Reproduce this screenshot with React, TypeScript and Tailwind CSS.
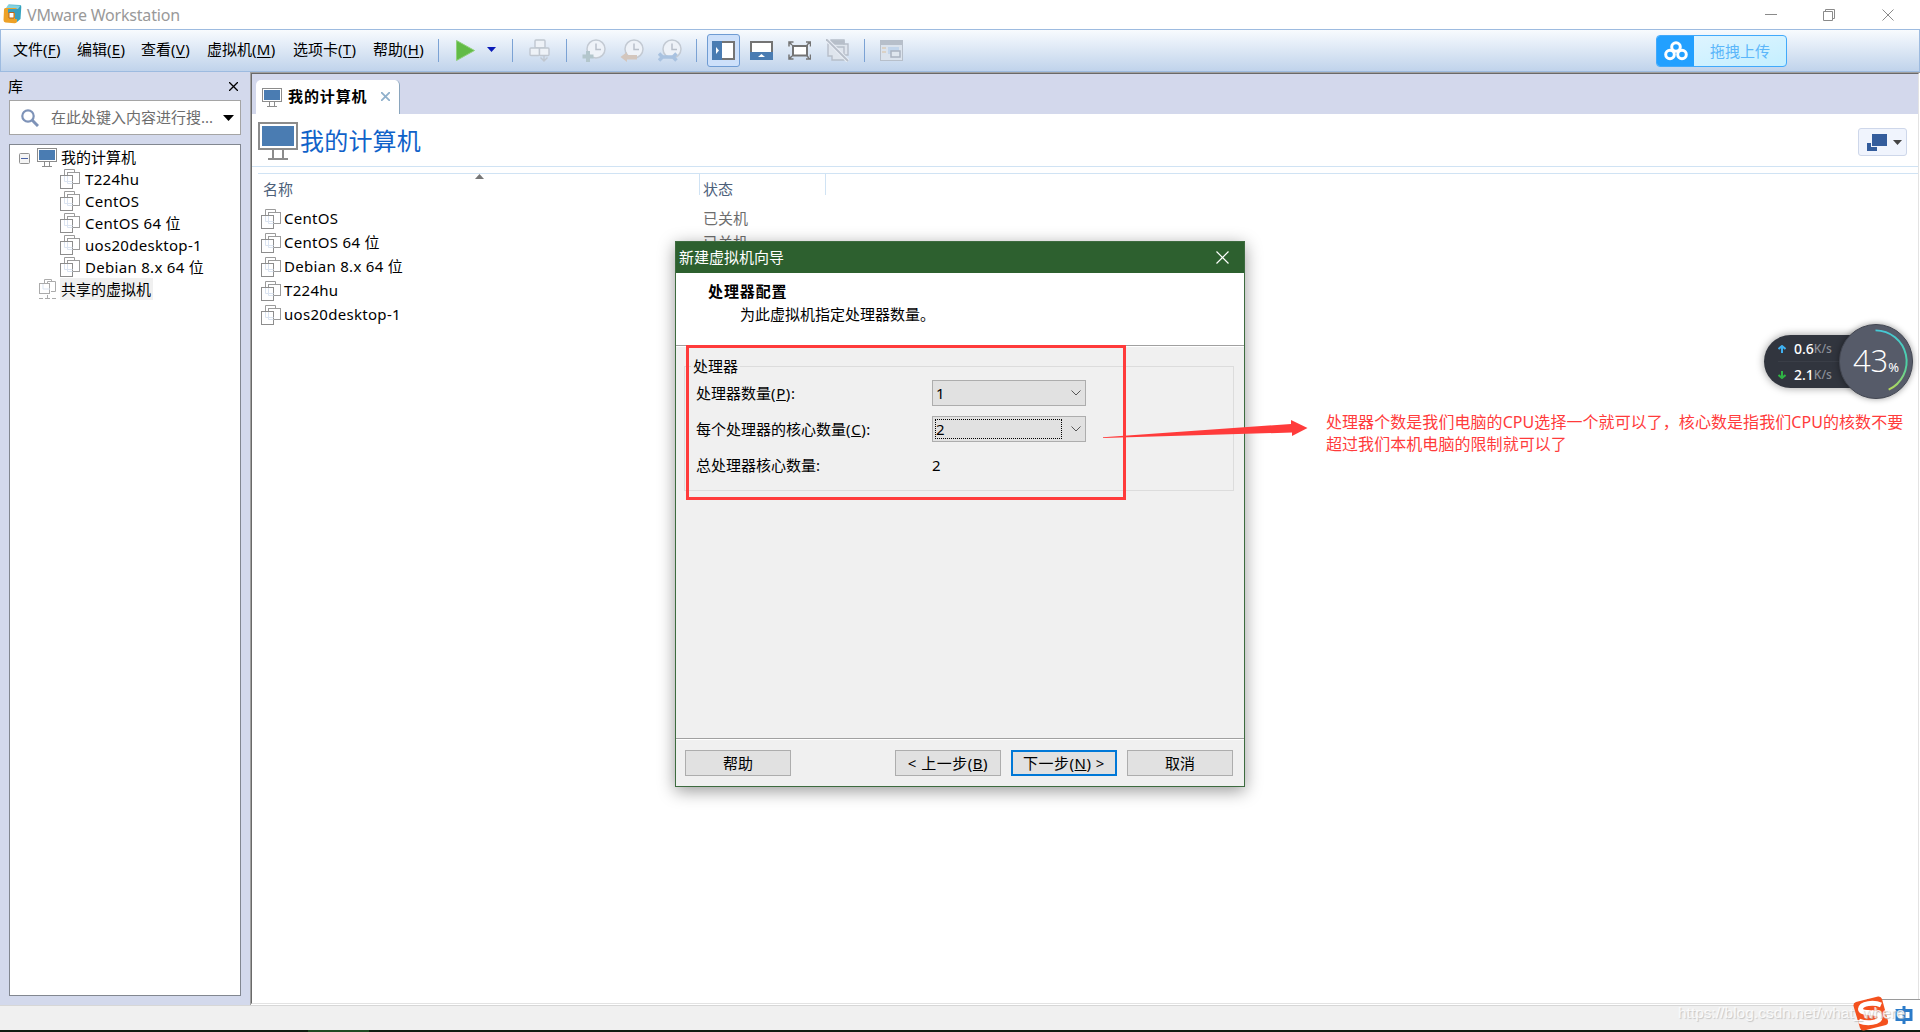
import React from 'react';

const VMS = ['T224hu', 'CentOS', 'CentOS 64 位', 'uos20desktop-1', 'Debian 8.x 64 位'];
const LIST = ['CentOS', 'CentOS 64 位', 'Debian 8.x 64 位', 'T224hu', 'uos20desktop-1'];

const menus = [
  { label: '文件', key: 'F', width: 'w-[64px]' },
  { label: '编辑', key: 'E', width: 'w-[64px]' },
  { label: '查看', key: 'V', width: 'w-[66px]' },
  { label: '虚拟机', key: 'M', width: 'w-[86px]' },
  { label: '选项卡', key: 'T', width: 'w-[80px]' },
  { label: '帮助', key: 'H', width: 'w-[65px]' }
];

const Monitor = ({ className = '' }: { className?: string }) => (
  <svg className={`shrink-0 ${className}`} viewBox="0 0 20 19">
    <rect x="0.5" y="0.5" width="19" height="13" fill="#fff" stroke="#8c8c8c" />
    <rect x="2" y="2" width="16" height="10" fill="#4a7cb2" />
    <path d="M7.5 14v4M12.5 14v4M5 18.5h10" stroke="#8c8c8c" fill="none" />
  </svg>
);

const VmIcon = () => (
  <svg className="shrink-0 w-5 h-5" viewBox="0 0 20 20" fill="none">
    <path d="M4.5 6V0.5h10V3" stroke="#9b9b9b" />
    <rect x="7.5" y="3.5" width="12" height="11" stroke="#9b9b9b" />
    <rect x="0.5" y="6.5" width="12" height="13" fill="#fff" stroke="#8d8d8d" />
    <path d="M4.5 7v5.5h8M7.5 7v7.5h5" stroke="#dbe4f1" />
  </svg>
);

const SharedIcon = () => (
  <svg className="shrink-0 w-[17px] h-5" viewBox="0 0 17 20" fill="none" stroke="#ababab">
    <path d="M5.5 4V0.5h7V2M12 12.5h4.5v-10h-8V5" />
    <rect x="0.5" y="4.5" width="10" height="10" fill="#fff" />
    <path d="M4 5v5h7" stroke="#dbe4f1" />
    <path d="M8.5 16v3M0 19.5h4M6 19.5h5M13 19.5h4" />
  </svg>
);

const Separator = () => <div className="w-px h-[23px] bg-[#7ba2d4]" />;

const Clock = ({ children }: { children: React.ReactNode }) => (
  <svg className="w-6 h-6" viewBox="0 0 24 24" fill="none">
    <circle cx="14" cy="10" r="9" fill="#eef2f8" stroke="#c3cad3" strokeWidth="1.5" />
    <path d="M14 4.5v6h5" stroke="#b9c0ca" strokeWidth="1.5" />
    {children}
  </svg>
);

const TitleBar = () => (
  <header className="flex items-center h-[29px] bg-white pl-[3px]">
    <svg className="w-[19px] h-5 mr-[5px] mb-px" viewBox="0 0 19 20">
      <path d="M5 1.5Q5 0.5 6 0.5L17 1Q18.5 1 18.3 3L17.5 15 14 18 4 12Z" fill="#35a3bf" />
      <path d="M5 1 17.5 1.5 15 5 3 4Z" fill="#85d2e0" />
      <path d="M1 5.5Q1 4 2.5 4H12.5Q14 4 14 5.5V17Q14 19.5 11.5 19.3L2.5 18.5Q0.5 18 0.5 16Z" fill="#eda127" />
      <path d="M5 5H16V15H12V9H5Z" fill="#3b9fbd" />
      <path d="M6 8.5H11V14H6Z" fill="#fff" stroke="#b5661b" />
    </svg>
    <span className="text-[16px] leading-5 text-[#999] tracking-[-0.2px]">VMware Workstation</span>
    <svg className="w-[130px] h-3 ml-auto mr-[25px]" viewBox="0 0 130 12" fill="none" stroke="#8a8a8a">
      <path d="M0 5.5h12M58.5 2.5h9v9h-9zM60.5 2.5v-2h9v9h-2M117.5 0.5l11 11M128.5 0.5l-11 11" />
    </svg>
  </header>
);

const Toolbar = () => (
  <div className="flex items-center h-[43px] border border-[#9dbbe0] bg-gradient-to-b from-[#f8fbfe] to-[#c0d3eb] pl-3">
    <nav className="flex w-[425px] pb-[3px]">
      {menus.map((m) => (
        <span key={m.key} className={`${m.width} text-[15px] leading-5 whitespace-nowrap`}>
          {m.label}
          <span className="tracking-[0.3px]">
            (<span className="underline underline-offset-2">{m.key}</span>)
          </span>
        </span>
      ))}
    </nav>
    <Separator />
    <svg className="w-[19px] h-[21px] ml-[17px]" viewBox="0 0 19 21">
      <path d="M0.5 0.5 18.5 10.5 0.5 20.5Z" fill="#62bb46" stroke="#8fd07a" />
    </svg>
    <svg className="w-[9px] h-[5px] ml-3 mb-[2px]" viewBox="0 0 9 5">
      <path d="M0 0H9L4.5 5Z" fill="#0a1ab8" />
    </svg>
    <div className="ml-4"><Separator /></div>
    <svg className="w-[21px] h-[23px] ml-4" viewBox="0 0 21 23" fill="#eef2f7" stroke="#c0c7d0" strokeWidth="1.4">
      <rect x="6" y="1" width="10" height="8" rx="1" />
      <rect x="1" y="9" width="9.5" height="7.5" rx="1" />
      <rect x="10.5" y="9" width="9.5" height="7.5" rx="1" />
      <path d="M15 16v6M11.5 18.5 15 22l3.5-3.5" fill="none" />
    </svg>
    <div className="ml-4"><Separator /></div>
    <div className="flex gap-[14px] ml-[15px]">
      <Clock>
        <path d="M6 12v11M0.5 17.5h11" stroke="#b3c6cc" strokeWidth="4" />
      </Clock>
      <Clock>
        <path d="M0.5 18 7 13v3h10v4.5H7V23Z" fill="#d3c6bd" />
      </Clock>
      <Clock>
        <path d="M1 14.5 4.5 18 1 21.500M4 18H15M18.500 14.500 15 18l3.500 3.500" stroke="#a9c2e0" strokeWidth="3.5" />
      </Clock>
    </div>
    <div className="ml-[14px]"><Separator /></div>
    <div className="flex items-center justify-center w-[33px] h-[33px] ml-[10px] rounded-[3px] border border-[#6f9cd3] bg-[#cde0fa]">
      <svg className="w-[23px] h-[19px]" viewBox="0 0 23 19">
        <rect x="1" y="1" width="21" height="17" fill="#fff" stroke="#747474" strokeWidth="2" />
        <path d="M0 0h10v19H0z" fill="#4a7cb2" />
        <path d="M4 6v7l3-3.5z" fill="#fff" />
      </svg>
    </div>
    <svg className="w-[23px] h-[19px] ml-[10px]" viewBox="0 0 23 19">
      <rect x="1" y="1" width="21" height="17" fill="#fff" stroke="#747474" strokeWidth="2" />
      <path d="M0 11h23v8H0z" fill="#4a7cb2" />
      <path d="M8 16h7l-3.5-3z" fill="#fff" />
    </svg>
    <svg className="w-[23px] h-[19px] ml-[15px]" viewBox="0 0 23 19" fill="none" stroke="#747474" strokeWidth="1.5">
      <rect x="5" y="5" width="14" height="9.5" fill="#fff" strokeWidth="2" />
      <path d="M1 5.5V1h4.5M18 1h4.5v4.5M1 13.5V18h4.5M18 18h4.5v-4.5M1 1l3 3M22 1l-3 3M1 18l3-3M22 18l-3-3" />
    </svg>
    <svg className="w-[23px] h-[23px] ml-[15px]" viewBox="0 0 23 23" fill="#dfe5ed" stroke="#b7bec9" strokeWidth="1.4">
      <path d="M5 1h13v4h4v11h-4v5H6v-4H2V5h3z" />
      <path d="M5 2h13v3H5z" fill="#b7bec9" />
      <path d="M8 8h10v8" fill="none" />
      <path d="M0 0 22 22" stroke="#e9eef5" strokeWidth="4" />
      <path d="M0 0 22 22" strokeWidth="1.8" />
    </svg>
    <div className="ml-[15px]"><Separator /></div>
    <svg className="w-[23px] h-[21px] ml-[15px]" viewBox="0 0 23 21">
      <rect x="0.5" y="0.5" width="22" height="20" fill="#dbe3ed" stroke="#b7bfca" />
      <path d="M0 0h23v5H0z" fill="#b7bfca" />
      <path d="M2 8h4M2 12h4" stroke="#dccdb9" strokeWidth="1.5" />
      <path d="M8 7h11v7H8z" fill="#c2d5eb" />
      <rect x="11" y="11" width="9" height="6" fill="#dfe6ee" stroke="#aab3c0" strokeWidth="1.5" />
    </svg>
    <div className="flex w-[131px] h-8 ml-auto mr-[132px] rounded-[4px] border border-[#41a9fb] bg-gradient-to-br from-[#e2f5ff] to-[#c4efff] overflow-hidden">
      <div className="flex items-center justify-center w-[37px] bg-[#22a0ff]">
        <svg className="w-6 h-5" viewBox="0 0 24 20" fill="none" stroke="#fff" strokeWidth="3">
          <circle cx="12" cy="6" r="4.3" />
          <circle cx="6" cy="13.5" r="4.3" />
          <circle cx="18" cy="13.5" r="4.3" />
        </svg>
      </div>
      <span className="flex-1 pl-[16px] text-[15px] leading-[31px] text-[#5bb6fa]">拖拽上传</span>
    </div>
  </div>
);

const Library = () => (
  <aside className="flex flex-col w-[250px] bg-[#d3d9ec] pl-[9px] pr-[9px] pb-[9px]">
    <div className="flex items-center justify-between h-7 pr-[3px] text-[15px]">
      <span className="-ml-px">库</span>
      <svg className="w-[9px] h-[9px]" viewBox="0 0 9 9" stroke="#000" strokeWidth="1.3">
        <path d="M0 0 9 9M9 0 0 9" />
      </svg>
    </div>
    <div className="flex items-center h-[35px] border border-[#a5a5a5] bg-white pl-[11px] pr-[6px]">
      <svg className="w-[18px] h-[18px] mr-3" viewBox="0 0 18 18" fill="none" stroke="#7e93b8">
        <circle cx="7" cy="7" r="5.7" strokeWidth="2.2" />
        <path d="M11 11 17 17" strokeWidth="3" />
      </svg>
      <span className="text-[15px] text-[#6d6d6d] whitespace-nowrap">在此处键入内容进行搜...</span>
      <svg className="w-[11px] h-[6px] ml-auto" viewBox="0 0 11 6">
        <path d="M0 0H11L5.5 6Z" />
      </svg>
    </div>
    <div className="flex-1 mt-[9px] border border-[#828790] bg-white pt-px text-[15px]">
      <div className="flex items-center h-[22px] pl-[9px]">
        <svg className="w-[11px] h-[11px] mt-[3px]" viewBox="0 0 11 11">
          <rect x="0.5" y="0.5" width="10" height="10" rx="1" fill="#f4f4f4" stroke="#919191" />
          <path d="M2 5.5h7" stroke="#4b63a7" />
        </svg>
        <Monitor className="w-5 h-[19px] ml-[7px] mr-[4px]" />
        <span>我的计算机</span>
      </div>
      {VMS.map((name) => (
        <div key={name} className="flex items-center h-[22px] pl-[50px]">
          <VmIcon />
          <span className="pl-[5px] whitespace-nowrap tracking-[0.3px]">{name}</span>
        </div>
      ))}
      <div className="flex items-center h-[22px] pl-[29px]">
        <SharedIcon />
        <span className="h-[22px] ml-1 pl-px pr-[2px] leading-[22px] bg-[#f0f0f0]">共享的虚拟机</span>
      </div>
    </div>
  </aside>
);

const Workspace = () => (
  <main className="flex flex-col flex-1 border-t border-l border-[#a0a0a0]">
    <div className="flex flex-col flex-1 border-t border-l border-t-[#696969] border-l-[#696969] border-r border-r-[#e3e3e3] border-b border-b-[#e3e3e3] bg-white mb-px mr-px">
      <div className="flex items-end h-10 bg-[#d3d8ec] pl-1">
        <div className="flex items-center w-36 h-[34px] rounded-t-[5px] border-r border-[#8aa5bd] bg-white pl-[6px]">
          <Monitor className="w-5 h-[19px]" />
          <span className="ml-[6px] pb-[2px] text-[15px] font-bold tracking-[0.9px]">我的计算机</span>
          <svg className="w-[9px] h-[9px] ml-[13px] mb-px" viewBox="0 0 9 9" stroke="#8fb0cb" strokeWidth="1.8">
            <path d="M0 0 9 9M9 0 0 9" />
          </svg>
        </div>
      </div>
      <div className="flex items-center h-[53px] border-b border-[#d0e3f4] pl-[6px] pr-[11px]">
        <Monitor className="w-10 h-[38px] mt-[2px]" />
        <h1 className="ml-[2px] pt-px text-[24px] leading-[30px] text-[#0f62c9] tracking-[0.2px]">我的计算机</h1>
        <div className="flex items-center w-[49px] h-7 mt-1 ml-auto rounded-[3px] border border-[#ced7ea] bg-[#f0f4fd] pl-2">
          <svg className="w-[20px] h-[17px]" viewBox="0 0 20 17" fill="#335c9c">
            <path d="M0 9h4v4h6v4H0zM5 0h15v12H5z" />
          </svg>
          <svg className="w-[9px] h-[5px] ml-[6px]" viewBox="0 0 9 5">
            <path d="M0 0H9L4.5 5Z" fill="#444" />
          </svg>
        </div>
      </div>
      <div className="flex h-[34px] mt-[6px] ml-[6px] border-t border-[#d0e3f4] text-[15px] leading-[30px] text-[#4c607a]">
        <div className="flex w-[442px] h-[21px] border-r border-[#d0e3f4] pl-[5px]">
          <span>名称</span>
          <svg className="w-[9px] h-[5px] ml-[182px]" viewBox="0 0 9 5">
            <path d="M4.5 0 9 5H0Z" fill="#777" />
          </svg>
        </div>
        <div className="w-[126px] h-[21px] border-r border-[#d0e3f4] pl-[3px]">状态</div>
      </div>
      <div className="pl-[9px] text-[15px]">
        {LIST.map((name) => (
          <div key={name} className="flex items-center h-6">
            <VmIcon />
            <span className="w-[419px] pl-[3px] pb-[2px] tracking-[0.3px]">{name}</span>
            <span className="pl-[3px] pb-[2px] text-[#6d6d6d]">已关机</span>
          </div>
        ))}
      </div>
    </div>
  </main>
);

const Select = ({ value, focused = false }: { value: string; focused?: boolean }) => (
  <div className="flex items-center w-[154px] h-[26px] border border-[#adadad] bg-[#e1e1e1] p-[2px] pr-[4px]">
    <span className={`w-[127px] h-5 leading-[18px] border border-dotted ${focused ? 'border-black' : 'border-transparent'}`}>{value}</span>
    <svg className="w-[10px] h-[6px] ml-auto" viewBox="0 0 10 6" fill="none" stroke="#555">
      <path d="M0.5 0.5 5 5 9.5 0.5" />
    </svg>
  </div>
);

const button = 'flex items-center justify-center w-[106px] h-[26px] bg-[#e1e1e1] whitespace-pre pb-px';

const Wizard = () => (
  <section className="absolute left-[675px] top-[241px] flex flex-col w-[570px] h-[546px] border border-[#3d6b3f] bg-[#f0f0f0] text-[15px] leading-5 shadow-[0_4px_16px_rgba(0,0,0,0.4)]">
    <div className="flex items-center justify-between h-[31px] bg-[#2d602f] pl-[3px] pr-[15px] text-white">
      <span className="pb-[2px]">新建虚拟机向导</span>
      <svg className="w-[13px] h-[13px]" viewBox="0 0 13 13" stroke="#fff" strokeWidth="1.2">
        <path d="M0.5 0.5 12.5 12.5M12.5 0.5 0.5 12.5" />
      </svg>
    </div>
    <div className="h-[73px] border-b border-[#a0a0a0] bg-white pt-2 pl-8">
      <h2 className="text-[15px] font-bold tracking-[0.9px]">处理器配置</h2>
      <p className="pt-[3px] pl-8">为此虚拟机指定处理器数量。</p>
    </div>
    <div className="flex-1 border-t border-white pl-2 pr-[10px] pt-[9px]">
      <fieldset className="h-[135px] border border-[#dcdcdc] pl-[11px]">
        <legend className="-ml-[5px] px-[2px]">处理器</legend>
        <div className="flex items-center h-[26px] mt-1">
          <span className="w-[236px]">处理器数量<span className="tracking-[0.6px]">(<u>P</u>):</span></span>
          <Select value="1" />
        </div>
        <div className="flex items-center h-[26px] mt-[10px]">
          <span className="w-[236px]">每个处理器的核心数量<span className="tracking-[0.6px]">(<u>C</u>):</span></span>
          <Select value="2" focused />
        </div>
        <div className="flex items-center h-[26px] mt-[10px]">
          <span className="w-[236px]">总处理器核心数量:</span>
          <span>2</span>
        </div>
      </fieldset>
    </div>
    <div className="flex h-[48px] border-t border-[#a0a0a0]">
      <div className="flex flex-1 gap-[10px] border-t border-white pl-[9px] pt-[10px]">
        <div className={`${button} border border-[#adadad] mr-[94px]`}>帮助</div>
        <div className={`${button} border border-[#adadad] tracking-[0.5px]`}>&lt; 上一步(<u>B</u>)</div>
        <div className={`${button} border-2 border-[#0078d7] tracking-[0.5px]`}>下一步(<u>N</u>) &gt;</div>
        <div className={`${button} border border-[#adadad]`}>取消</div>
      </div>
    </div>
  </section>
);

const Annotation = () => (
  <>
    <div className="absolute left-[686px] top-[345px] w-[440px] h-[155px] border-[3px] border-[#ff3b3b]" />
    <svg className="absolute left-[1103px] top-[420px] w-[205px] h-[19px]" viewBox="0 0 205 19">
      <path d="M0 17.2 188 4V0L204.5 8 189 16V12.5L0 18Z" fill="#ff3b3b" />
    </svg>
    <p className="absolute left-[1326px] top-[411px] text-[16px] leading-[22px] text-[#ff3b3b] tracking-[0.06px] whitespace-nowrap">
      处理器个数是我们电脑的CPU选择一个就可以了，核心数是指我们CPU的核数不要
      <br />
      超过我们本机电脑的限制就可以了
    </p>
  </>
);

const SpeedMeter = () => (
  <div className="absolute left-[1764px] top-[324px] flex items-center w-[149px] h-[75px]">
    <div className="flex flex-col justify-center w-[110px] h-[53px] rounded-l-[27px] bg-[#31353e] shadow-[0_0_8px_rgba(0,0,0,0.4)] pl-[14px] text-[14px] font-medium leading-[26px] text-white">
      <div className="flex items-center h-[26px] border-b border-[#3a3e47] pt-[2px]">
        <svg className="w-2 h-2 mr-2" viewBox="0 0 8 8" fill="none" stroke="#3fb0f0" strokeWidth="2">
          <path d="M0.5 4 4 1l3.5 3M4 1v7" />
        </svg>
        0.6<span className="text-[12px] text-[#8b8f98]">K/s</span>
      </div>
      <div className="flex items-center h-[26px]">
        <svg className="w-2 h-2 mr-2" viewBox="0 0 8 8" fill="none" stroke="#2fb344" strokeWidth="2">
          <path d="M0.5 4 4 7l3.5-3M4 7V0" />
        </svg>
        2.1<span className="text-[12px] text-[#8b8f98]">K/s</span>
      </div>
    </div>
    <div className="absolute right-0 top-0 flex items-baseline justify-center w-[74px] h-[75px] rounded-full border border-[#434752] bg-[#565b69] shadow-[0_0_6px_rgba(0,0,0,0.4)] pt-[15px] text-white">
      <span className="text-[31px] leading-[40px] font-light font-['Open_Sans']">43</span>
      <span className="text-[13px]">%</span>
      <svg className="absolute inset-0 w-full h-full" viewBox="0 0 74 75" fill="none">
        <defs>
          <linearGradient id="ring" x1="0" y1="0" x2="0" y2="1">
            <stop offset="0" stopColor="#45c9d6" />
            <stop offset="0.6" stopColor="#4fd0a0" />
            <stop offset="1" stopColor="#b5d95b" />
          </linearGradient>
        </defs>
        <path d="M36.5 5.5A32 32 0 0 1 50 66.5" stroke="url(#ring)" strokeWidth="2" />
      </svg>
    </div>
  </div>
);

const ImeBar = () => (
  <>
    <div className="absolute left-[1867px] top-[999px] w-[53px] h-[31px] border-t border-[#9a9a9a] bg-white" />
    <svg className="absolute left-[1852px] top-[995px] w-[68px] h-[37px]" viewBox="0 0 68 37" fill="none">
      <path d="M4 7 26 1.5Q29 1 30 4L36 26Q36.5 29 34 30L12 35.5Q9 36 8 33L1.5 11Q1 8 4 7Z" fill="#f4511e" />
      <path d="M29 10C22 7 9 8 8.500 14C8.500 20 28 15.500 28 22C28 28 15 29 7 26" stroke="#fff" strokeWidth="5" />
      <path d="M45 15.5h14v9h-14zM52 11v18" stroke="#2b7bc9" strokeWidth="3" />
    </svg>
    <span className="absolute left-[1678px] top-[1003px] font-['Liberation_Sans'] text-[15.5px] leading-5 text-white/80 whitespace-nowrap [text-shadow:1px_1px_1px_#c4c4c4]">
      https://blog.csdn.net/what_where
    </span>
  </>
);

const App = () => (
  <div className="relative flex flex-col w-[1920px] h-[1032px] overflow-hidden bg-white text-black font-['Noto_Sans','Noto_Sans_CJK_SC',sans-serif]">
    <TitleBar />
    <Toolbar />
    <div className="flex flex-1">
      <Library />
      <Workspace />
    </div>
    <footer className="flex items-end h-[27px] border-t border-[#d7d7d7] bg-[#f0f0f0]">
      <div className="w-full h-[2px] bg-[#0f1d10] pl-[308px]">
        <div className="w-[61px] h-[2px] bg-[#1f4a22]" />
      </div>
    </footer>
    <Wizard />
    <Annotation />
    <SpeedMeter />
    <ImeBar />
  </div>
);

export default App;
